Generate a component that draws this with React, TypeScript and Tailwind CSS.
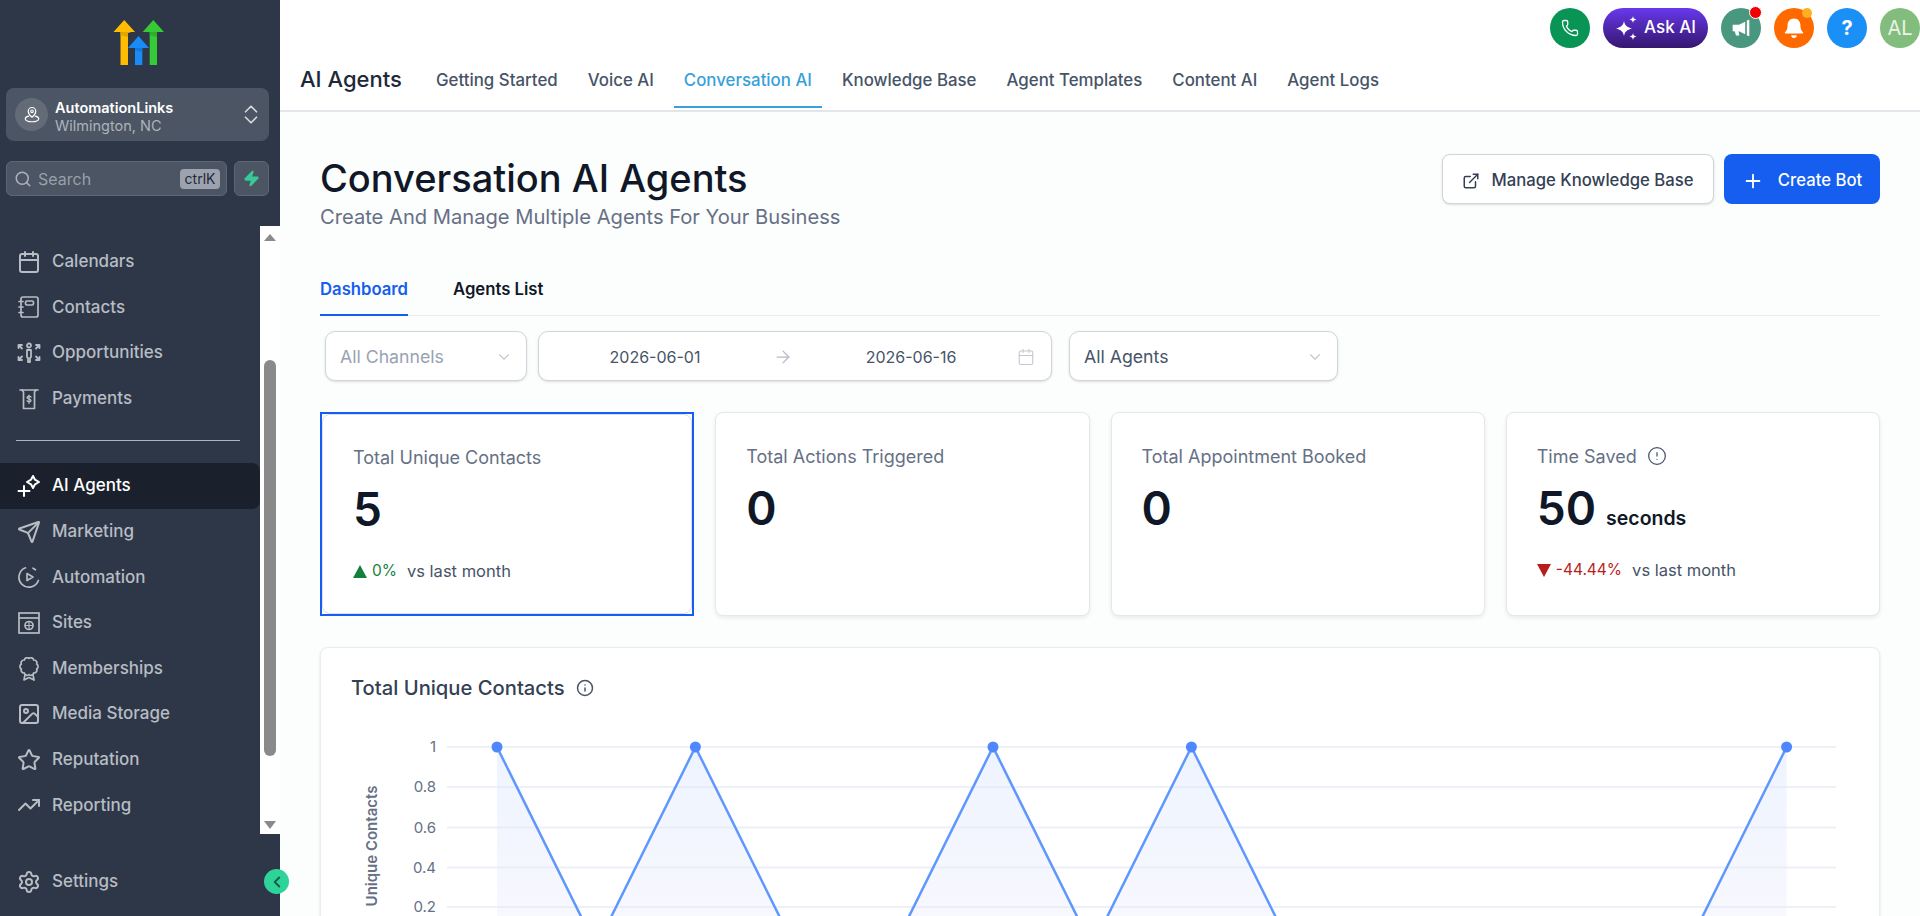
import React from "react";
import {
  AlertCircle,
  ArrowRight,
  Calendar,
  ChevronDown,
  ChevronLeft,
  ChevronUp,
  ExternalLink,
  Image as ImageIcon,
  Info,
  Phone,
  Plus,
  Search,
  Send,
  Settings,
  Star,
  TrendingUp,
  Zap,
} from "lucide-react";

type IconProps = { className?: string };

const svgBase = {
  viewBox: "0 0 24 24",
  fill: "none",
  stroke: "currentColor",
  strokeWidth: 1.7,
  strokeLinecap: "round" as const,
  strokeLinejoin: "round" as const,
};

function ContactsIcon({ className }: IconProps) {
  return (
    <svg {...svgBase} className={className}>
      <rect x="4" y="2" width="17" height="20" rx="2" />
      <rect x="8.5" y="6" width="8" height="4" rx="1.5" />
      <path d="M2 6.5h4M2 12h4M2 17.5h4" />
    </svg>
  );
}

function OpportunitiesIcon({ className }: IconProps) {
  return (
    <svg {...svgBase} strokeWidth={1.8} className={className}>
      <circle cx="12" cy="4.5" r="2" />
      <path d="M10 9h4v7l-1 1v4h-2v-4l-1-1z" />
      <path d="M1.500 4h3.500M1.500 4v3M1.500 4l3.500 3.500M22.500 4H19M22.500 4v3M22.500 4L19 7.500" />
      <path d="M1.500 19h3.500M1.500 19v-3M1.500 19l3.500-3.500M22.500 19H19M22.500 19v-3M22.500 19L19 15.500" />
    </svg>
  );
}

function PaymentsIcon({ className }: IconProps) {
  return (
    <svg {...svgBase} className={className}>
      <path d="M3 3h18" />
      <path d="M5 3l1.500 2v16.500h11V5L19 3" />
      <path d="M14 10c-.5-1-3.500-1.300-3.900.3-.4 1.900 3.900 1.300 3.900 3.200 0 1.700-3.500 1.500-4 .3M12 8.300v8" strokeWidth={1.4} />
    </svg>
  );
}

function AgentsIcon({ className }: IconProps) {
  return (
    <svg {...svgBase} strokeWidth={2} className={className}>
      <path d="M16 2l2 3.700 4 2.300-4 2.300-2 3.700-2-3.700-4-2.300 4-2.300z" />
      <path d="M7 12v10M1.500 17h11" />
    </svg>
  );
}

function AutomationIcon({ className }: IconProps) {
  return (
    <svg {...svgBase} className={className}>
      <path d="M8.500 2.800a10 10 0 1 0 12.900 12.700" />
      <path d="M16 3.200a10 10 0 0 1 2.500 1.600" />
      <path d="M10 8.500l6 3.500-6 3.500z" />
    </svg>
  );
}

function SitesIcon({ className }: IconProps) {
  return (
    <svg {...svgBase} strokeLinecap="butt" strokeLinejoin="miter" className={className}>
      <rect x="2" y="2" width="20" height="20" />
      <path d="M2 7h20" />
      <circle cx="12" cy="14.500" r="4" />
      <path d="M8 14.500h8M12 10.500v8" strokeWidth={1.2} />
    </svg>
  );
}

// scalloped edge of the rosette, ten bumps round a circle
const rosette = Array.from({ length: 10 }, (_, i) => {
  const a = (i * Math.PI) / 5 - Math.PI / 2;
  const x = (12 + 8 * Math.cos(a)).toFixed(2);
  const y = (9.500 + 8 * Math.sin(a)).toFixed(2);
  return `${i === 0 ? "M" : "A2.800 2.800 0 0 1 "}${x} ${y}`;
}).join(" ");

function MembershipsIcon({ className }: IconProps) {
  return (
    <svg {...svgBase} className={className}>
      <path d={`${rosette} A2.800 2.800 0 0 1 12 1.500 Z`} />
      <path d="M8 17.500L7 23l5-2.500 5 2.500-1-5.500" />
    </svg>
  );
}

function LocationIcon({ className }: IconProps) {
  return (
    <svg {...svgBase} strokeWidth={1.6} className={className}>
      <path d="M12 15s5-3.800 5-8a5 5 0 0 0-10 0c0 4.200 5 8 5 8z" />
      <circle cx="12" cy="7" r="1.700" />
      <path d="M7.500 13.500C4.500 14.300 3 15.500 3 17c0 2.200 4 4 9 4s9-1.800 9-4c0-1.500-1.500-2.700-4.500-3.500" />
    </svg>
  );
}

function SparkIcon({ className }: IconProps) {
  return (
    <svg viewBox="0 0 24 24" fill="currentColor" className={className}>
      <path d="M9 5c.8 4.200 2.800 6.200 8 7.500-5.200 1.300-7.200 3.300-8 7.500-.8-4.200-2.800-6.200-8-7.500C6.200 11.200 8.200 9.200 9 5z" />
      <path d="M18 0c.4 2.200 1.300 3.100 3.500 3.500-2.200.4-3.100 1.300-3.500 3.500-.4-2.200-1.300-3.100-3.500-3.500C16.700 3.100 17.600 2.200 18 0z" />
      <path d="M18 17c.4 2.200 1.300 3.100 3.500 3.500-2.200.4-3.100 1.300-3.500 3.500-.4-2.200-1.300-3.100-3.500-3.500 2.200-.4 3.100-1.300 3.500-3.500z" />
    </svg>
  );
}

function MegaphoneIcon({ className }: IconProps) {
  return (
    <svg viewBox="0 0 24 24" fill="currentColor" className={className}>
      <path d="M2 8h7.500L17 4.500v15L9.500 16H9l1 5H6l-1.500-5H2z" />
      <path d="M19 3l3 -1v20l-3-1z" />
    </svg>
  );
}

function BellIcon({ className }: IconProps) {
  return (
    <svg viewBox="0 0 24 24" fill="currentColor" className={className}>
      <path d="M12 1.500c-4.200 0-7 3.200-7 7.200 0 4.300-.9 6-2.800 7.800-.4.500-.1 1.500.8 1.500h18c.9 0 1.200-1 .8-1.500C19.900 14.700 19 13 19 8.700c0-4-2.800-7.200-7-7.200z" />
      <path d="M9 20h6a3 3 0 0 1-6 0z" />
    </svg>
  );
}

const navTop = [
  { name: "Calendars", icon: Calendar },
  { name: "Contacts", icon: ContactsIcon },
  { name: "Opportunities", icon: OpportunitiesIcon },
  { name: "Payments", icon: PaymentsIcon },
];

const navBottom = [
  { name: "AI Agents", icon: AgentsIcon, active: true },
  { name: "Marketing", icon: Send },
  { name: "Automation", icon: AutomationIcon },
  { name: "Sites", icon: SitesIcon },
  { name: "Memberships", icon: MembershipsIcon },
  { name: "Media Storage", icon: ImageIcon },
  { name: "Reputation", icon: Star },
  { name: "Reporting", icon: TrendingUp },
];

const topTabs = ["Getting Started", "Voice AI", "Conversation AI", "Knowledge Base", "Agent Templates", "Content AI", "Agent Logs"];

function NavRow({ name, icon: Icon, active }: { name: string; icon: React.ComponentType<IconProps>; active?: boolean }) {
  return (
    <div
      className={`flex h-[45.600px] items-center gap-[11px] pl-[17px] text-[17px] font-medium ${
        active ? "rounded-r-lg bg-[#1a202c] text-white" : "text-[#b8bcc3]"
      }`}
    >
      <Icon className="h-6 w-6 shrink-0" />
      <span>{name}</span>
    </div>
  );
}

function Sidebar() {
  return (
    <aside className="relative flex h-full w-[280px] shrink-0 flex-col bg-[#2d3748]">
      <div className="flex justify-center pt-5 pr-[2px]">
        <svg width="52" height="46" viewBox="112 20 52 46">
          <path d="M123.200 20l10.800 12h-3.800L127 33v32h-7.500V32h-7z" fill="#ffbc00" />
          <path d="M119.500 32h7.500v5l-7.500-2z" fill="#e0a600" />
          <path d="M137.500 36l10.500 12h-6.700v17H134V48h-7z" fill="#188bf6" />
          <path d="M134 48h7.300v4l-7.300-2z" fill="#1278d8" />
          <path d="M152.300 20L163 32h-7v33h-7.300V32h-7z" fill="#37ca37" />
          <path d="M148.700 32h7.300v5l-7.300-2z" fill="#2cb02c" />
        </svg>
      </div>

      <div className="ml-[6px] mr-[11px] mt-[22px] flex h-[53px] items-center rounded-lg bg-[#4b5563] pl-[9px] pr-[7px]">
        <div className="flex h-[33px] w-[33px] items-center justify-center rounded-full bg-[#636b78] text-white">
          <LocationIcon className="h-[18px] w-[18px]" />
        </div>
        <div className="ml-[7px] flex-1 pt-[5px]">
          <div className="text-[14.500px] font-semibold leading-[18px] text-white">AutomationLinks</div>
          <div className="text-[14.500px] leading-[18px] text-[#aeb3bb]">Wilmington, NC</div>
        </div>
        <div className="flex flex-col text-[#d8dade]">
          <ChevronUp className="-mb-[5.500px] h-[22px] w-[22px]" strokeWidth={1.800} />
          <ChevronDown className="-mt-[5.500px] h-[22px] w-[22px]" strokeWidth={1.800} />
        </div>
      </div>

      <div className="ml-[6px] mr-[11px] mt-5 flex h-[35px] gap-[7px]">
        <div className="flex flex-1 items-center rounded-md border border-[#5d6673] bg-[#4b5563] pl-[7px] pr-[6px]">
          <Search className="h-[18px] w-[18px] text-[#aeb3bb]" />
          <span className="ml-[6px] flex-1 text-[16px] text-[#98a0ab]">Search</span>
          <span className="flex h-5 w-[40px] items-center justify-center rounded-sm bg-[#9ca3af] text-[14px] text-[#1f2937]">ctrlK</span>
        </div>
        <div className="flex w-[35px] items-center justify-center rounded-md border border-[#5d6673] bg-[#4b5563]">
          <Zap className="h-[17px] w-[17px] fill-[#37ca97] text-[#37ca97]" />
        </div>
      </div>

      <div className="mt-[30px] flex h-[608px]">
        <nav className="w-[260px] pt-[13px]">
          {navTop.map((item) => (
            <NavRow key={item.name} {...item} />
          ))}
          <div className="ml-4 mr-5 mt-[19px] mb-[22px] h-px bg-[#b0b4bb]" />
          {navBottom.map((item) => (
            <NavRow key={item.name} {...item} />
          ))}
        </nav>
        <div className="flex w-5 flex-col items-center bg-white">
          <div className="mt-2 h-0 w-0 border-x-[6px] border-b-[7px] border-x-transparent border-b-[#8a8a8a]" />
          <div className="mt-[119px] h-[396px] w-[11.500px] rounded-md bg-[#8a8a8a]" />
          <div className="mt-[65px] h-0 w-0 border-x-[6px] border-t-[8px] border-x-transparent border-t-[#8a8a8a]" />
        </div>
      </div>

      <div className="mt-[25px]">
        <NavRow name="Settings" icon={Settings} />
      </div>

      <div className="absolute left-[264px] top-[869px] z-10 flex h-[25px] w-[25px] items-center justify-center rounded-full bg-[#2ed39a]">
        <ChevronLeft className="h-[18px] w-[18px] text-[#155e4a]" strokeWidth={2.500} />
      </div>
    </aside>
  );
}

function Header() {
  return (
    <header className="h-[112px] border-b-2 border-[#e2e6ea] bg-white">
      <div className="flex h-[48px] items-end justify-end">
        <div className="flex h-10 w-10 items-center justify-center rounded-full bg-[#079455] text-white">
          <Phone className="h-[18px] w-[18px]" strokeWidth={1.700} />
        </div>
        <div className="ml-[13px] flex h-10 w-[105px] items-center justify-center gap-[5px] rounded-full bg-gradient-to-b from-[#6938ef] to-[#35176f] text-[17px] font-medium text-white">
          <SparkIcon className="h-6 w-6" />
          <span>Ask AI</span>
        </div>
        <div className="relative ml-[13px] flex h-10 w-10 items-center justify-center rounded-full bg-[#4a9780] text-white">
          <MegaphoneIcon className="h-[20px] w-[20px]" />
          <span className="absolute -right-px -top-[2px] h-[13px] w-[13px] rounded-full border border-white bg-[#f50000]" />
        </div>
        <div className="relative ml-[13px] flex h-10 w-10 items-center justify-center rounded-full bg-[#ff6a00] text-white">
          <BellIcon className="h-[22px] w-[22px]" />
          <span className="absolute right-[2px] top-0 h-[10px] w-[10px] rounded-full bg-[#fdb022]" />
        </div>
        <div className="ml-[13px] flex h-10 w-10 items-center justify-center rounded-full bg-[#1a8ff6] text-[20px] font-bold text-white">?</div>
        <div className="ml-[13px] flex h-10 w-10 items-center justify-center rounded-full bg-[#82bd7d] text-[20px] text-[#e9f3e7]">AL</div>
      </div>
      <div className="flex h-[62px] items-start pl-5">
        <div className="w-[126px] pt-[15px] text-[22px] font-medium leading-[32px] text-[#1d2939]">AI Agents</div>
        <div className="flex gap-[10px]">
          {topTabs.map((tab) => (
            <div
              key={tab}
              className={`flex h-[60px] items-center border-b-2 px-[10px] pt-2 text-[16.850px] font-medium ${
                tab === "Conversation AI" ? "border-[#38a0db] text-[#38a0db]" : "border-transparent text-[#475467]"
              }`}
            >
              {tab}
            </div>
          ))}
        </div>
      </div>
    </header>
  );
}

function Delta({ value, up }: { value: string; up?: boolean }) {
  return (
    <div className="mt-[26px] flex h-6 items-center text-[16.500px] text-[#475467]">
      {up ? (
        <span className="h-0 w-0 border-x-[7px] border-b-[13px] border-x-transparent border-b-[#15803d]" />
      ) : (
        <span className="h-0 w-0 border-x-[7px] border-t-[13px] border-x-transparent border-t-[#b91c1c]" />
      )}
      <span className={`ml-[5px] mr-[10px] text-[15.500px] ${up ? "text-[#15803d]" : "text-[#b91c1c]"}`}>{value}</span>
      <span>vs last month</span>
    </div>
  );
}

function StatBody({ label, value, unit, delta, up, info }: { label: string; value: string; unit?: string; delta?: string; up?: boolean; info?: boolean }) {
  return (
    <>
      <div className="flex h-6 items-center gap-[10px] text-[18px] text-[#667085]">
        {label}
        {info && <AlertCircle className="h-5 w-5 text-[#475467]" strokeWidth={1.500} />}
      </div>
      <div className="mt-4 flex h-12 items-baseline text-[#101828]">
        <span className="text-[46px] font-semibold leading-[48px]">{value}</span>
        {unit && <span className="ml-[10px] text-[19.500px] font-semibold">{unit}</span>}
      </div>
      {delta && <Delta value={delta} up={up} />}
    </>
  );
}

function StatCard(props: { label: string; value: string; unit?: string; delta?: string; up?: boolean; info?: boolean }) {
  return (
    <div className="h-[204px] rounded-lg border border-[#e4e7ec] bg-white pl-[30px] pt-[31px] shadow-[0_2px_4px_rgba(16,24,40,0.08)]">
      <StatBody {...props} />
    </div>
  );
}

const gridLines = [747, 787, 827.500, 867.500, 907];
const gridLabels = ["1", "0.8", "0.6", "0.4", "0.2"];
// one value per day, the chart runs off the bottom of the window
const series = [1, 0, 1, 0, 0, 1, 0, 1, 0, 0, 0, 0, 0, 1];
const points = series.map((v, i) => ({ x: 497 + i * 99.200, y: 947 - v * 200, v }));
const linePath = points.map((p, i) => `${i === 0 ? "M" : "L"}${p.x} ${p.y}`).join(" ");
const areaPath = `${linePath} L${points[points.length - 1].x} 947 L497 947 Z`;

function Chart() {
  return (
    <svg width="1558" height="250" className="mt-[14px] block">
      <defs>
        <linearGradient id="fade" x1="0" y1="0" x2="0" y2="1">
          <stop offset="0" stopColor="#dbe8ff" stopOpacity="0.5" />
          <stop offset="1" stopColor="#ebeafc" stopOpacity="0.3" />
        </linearGradient>
      </defs>
      <g transform="translate(-321 -714)">
        {gridLines.map((y, i) => (
          <g key={y}>
            <line x1="447" x2="1836" y1={y} y2={y} stroke="#edf0f6" strokeWidth="2" />
            <text x="436" y={y + 5} textAnchor="end" fontSize="15" fill="#667085">
              {gridLabels[i]}
            </text>
          </g>
        ))}
        <path d={areaPath} fill="url(#fade)" />
        <path d={linePath} fill="none" stroke="#5f97ff" strokeWidth="2.500" strokeLinejoin="round" />
        {points
          .filter((p) => p.v === 1)
          .map((p) => (
            <circle key={p.x} cx={p.x} cy={p.y} r="5.500" fill="#4f87ff" />
          ))}
        <text
          transform="translate(377 846) rotate(-90)"
          textAnchor="middle"
          fontSize="15"
          fontWeight="600"
          fill="#667085"
        >
          Unique Contacts
        </text>
      </g>
    </svg>
  );
}

export default function App() {
  return (
    <div className="flex h-[916px] w-[1920px] overflow-hidden font-['Inter',sans-serif]">
      <Sidebar />
      <main className="min-w-0 flex-1 bg-[#fcfdfd]">
        <Header />
        <div className="px-10">
          <div className="flex items-start justify-between pt-[42px]">
            <div className="pt-[2px]">
              <h1 className="text-[38px] font-medium leading-[44px] text-[#101828]">Conversation AI Agents</h1>
              <p className="mt-[3px] text-[20.150px] leading-[28px] text-[#667085]">Create And Manage Multiple Agents For Your Business</p>
            </div>
            <div className="flex gap-[10px]">
              <button className="flex h-[50px] w-[272px] items-center justify-center gap-[11px] rounded-lg border border-[#d0d5dd] bg-white pt-[3px] text-[16.700px] font-medium text-[#344054] shadow-sm">
                <ExternalLink className="h-[18px] w-[18px]" />
                Manage Knowledge Base
              </button>
              <button className="flex h-[50px] w-[156px] items-center justify-center gap-[14px] rounded-lg bg-[#155eef] pt-[3px] text-[16.700px] font-medium text-white">
                <Plus className="h-[22px] w-[22px]" />
                Create Bot
              </button>
            </div>
          </div>

          <div className="mt-[32px] flex h-[53px] border-b border-[#eaecf0]">
            <div className="flex h-[53px] items-center border-b-2 border-[#155eef] pt-[2px] text-[16.700px] font-semibold text-[#155eef]">Dashboard</div>
            <div className="ml-[45px] flex h-[52px] items-center pt-[2px] text-[16.700px] font-semibold text-[#101828]">Agents List</div>
          </div>

          <div className="mt-[15px] flex gap-[11px] pl-[5px]">
            <div className="flex h-[50px] w-[202px] items-center justify-between rounded-[10px] border border-[#d0d5dd] bg-white pl-[14px] pr-[13px] pt-[2px] text-[17.700px] text-[#98a2b3] shadow-sm">
              All Channels
              <ChevronDown className="h-[18px] w-[18px] text-[#c3c8d0]" strokeWidth={1.500} />
            </div>
            <div className="flex h-[50px] w-[514px] items-center rounded-[10px] border border-[#d0d5dd] bg-white pt-[2px] text-[16px] text-[#475467] shadow-sm">
              <span className="w-[232px] text-center">2026-06-01</span>
              <ArrowRight className="h-5 w-6 shrink-0 text-[#b4bac4]" strokeWidth={1.500} />
              <span className="w-[232px] text-center">2026-06-16</span>
              <Calendar className="-ml-[10px] h-[18px] w-[18px] text-[#c3c8d0]" strokeWidth={1.500} />
            </div>
            <div className="ml-[6px] flex h-[50px] w-[269px] items-center justify-between rounded-[10px] border border-[#d0d5dd] bg-white pl-[14px] pr-[13px] pt-[2px] text-[17.700px] text-[#475467] shadow-sm">
              All Agents
              <ChevronDown className="h-[18px] w-[18px] text-[#c3c8d0]" strokeWidth={1.500} />
            </div>
          </div>

          <div className="mt-[31px] grid grid-cols-4 gap-[21px]">
            <div className="h-[204px] border-2 border-[#155eef] bg-white">
              <div className="h-full rounded-lg border border-[#d9dee8] pl-[30px] pt-[30px]">
                <StatBody label="Total Unique Contacts" value="5" delta="0%" up />
              </div>
            </div>
            <StatCard label="Total Actions Triggered" value="0" />
            <StatCard label="Total Appointment Booked" value="0" />
            <StatCard label="Time Saved" value="50" unit="seconds" delta="-44.44%" info />
          </div>

          <div className="mt-[31px] h-[400px] rounded-lg border border-[#eaecf0] bg-white pt-[28px] shadow-sm">
            <div className="flex h-6 items-center gap-[11px] pl-[30px] text-[20.200px] font-medium text-[#344054]">
              Total Unique Contacts
              <Info className="h-[18px] w-[18px] text-[#475467]" />
            </div>
            <Chart />
          </div>
        </div>
      </main>
    </div>
  );
}
